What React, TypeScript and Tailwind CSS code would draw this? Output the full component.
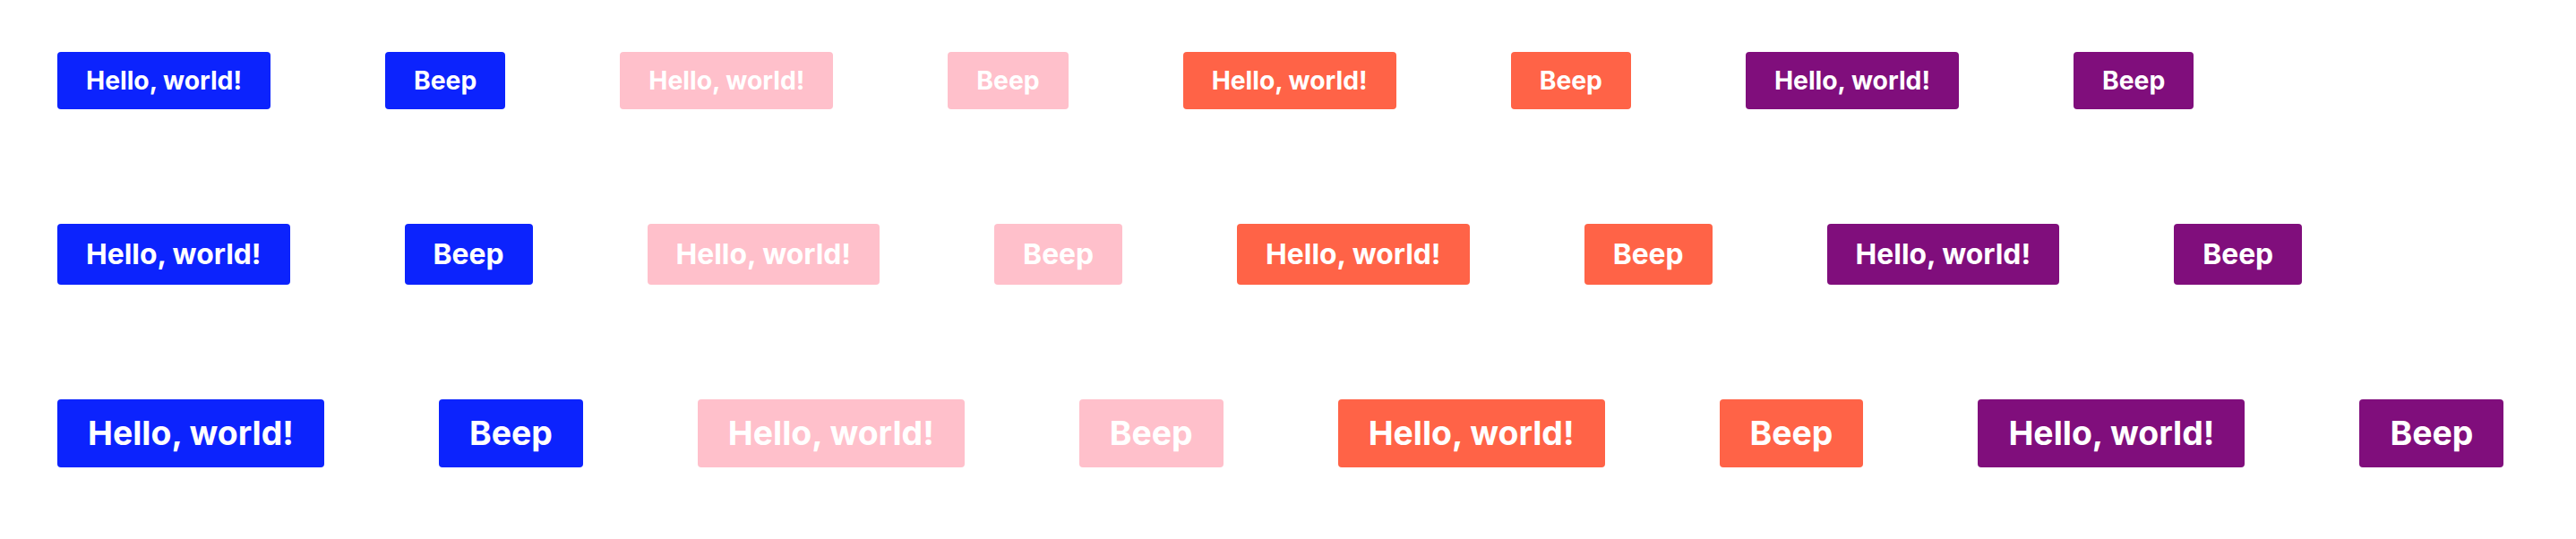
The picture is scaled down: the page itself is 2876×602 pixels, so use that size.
import React from "react";

const colors = [
  { bg: "bg-[#0c23fd]" },
  { bg: "bg-[#ffc0cb]" },
  { bg: "bg-[#ff6347]" },
  { bg: "bg-[#800e7c]" },
];

const sizes = [
  { cls: "h-[64px] px-8 text-[28.3px]" },
  { cls: "h-[68px] px-8 text-[31.8px]" },
  { cls: "h-[76px] px-[34px] text-[37.4px]" },
];

function Btn({ label, bg, size }: { label: string; bg: string; size: string }) {
  return (
    <button
      className={`${bg} ${size} flex items-center justify-center rounded-[4px] font-bold leading-none text-white whitespace-nowrap`}
      style={{ fontFamily: "Inter, 'Noto Sans', sans-serif" }}
    >
      {label}
    </button>
  );
}

export default function App() {
  return (
    <div className="min-h-[602px] w-full bg-white pl-16 pt-[58px] flex flex-col gap-32">
      {sizes.map((s, i) => (
        <div key={i} className="flex items-center gap-32">
          {colors.map((c, j) => (
            <React.Fragment key={j}>
              <Btn label="Hello, world!" bg={c.bg} size={s.cls} />
              <Btn label="Beep" bg={c.bg} size={s.cls} />
            </React.Fragment>
          ))}
        </div>
      ))}
    </div>
  );
}
